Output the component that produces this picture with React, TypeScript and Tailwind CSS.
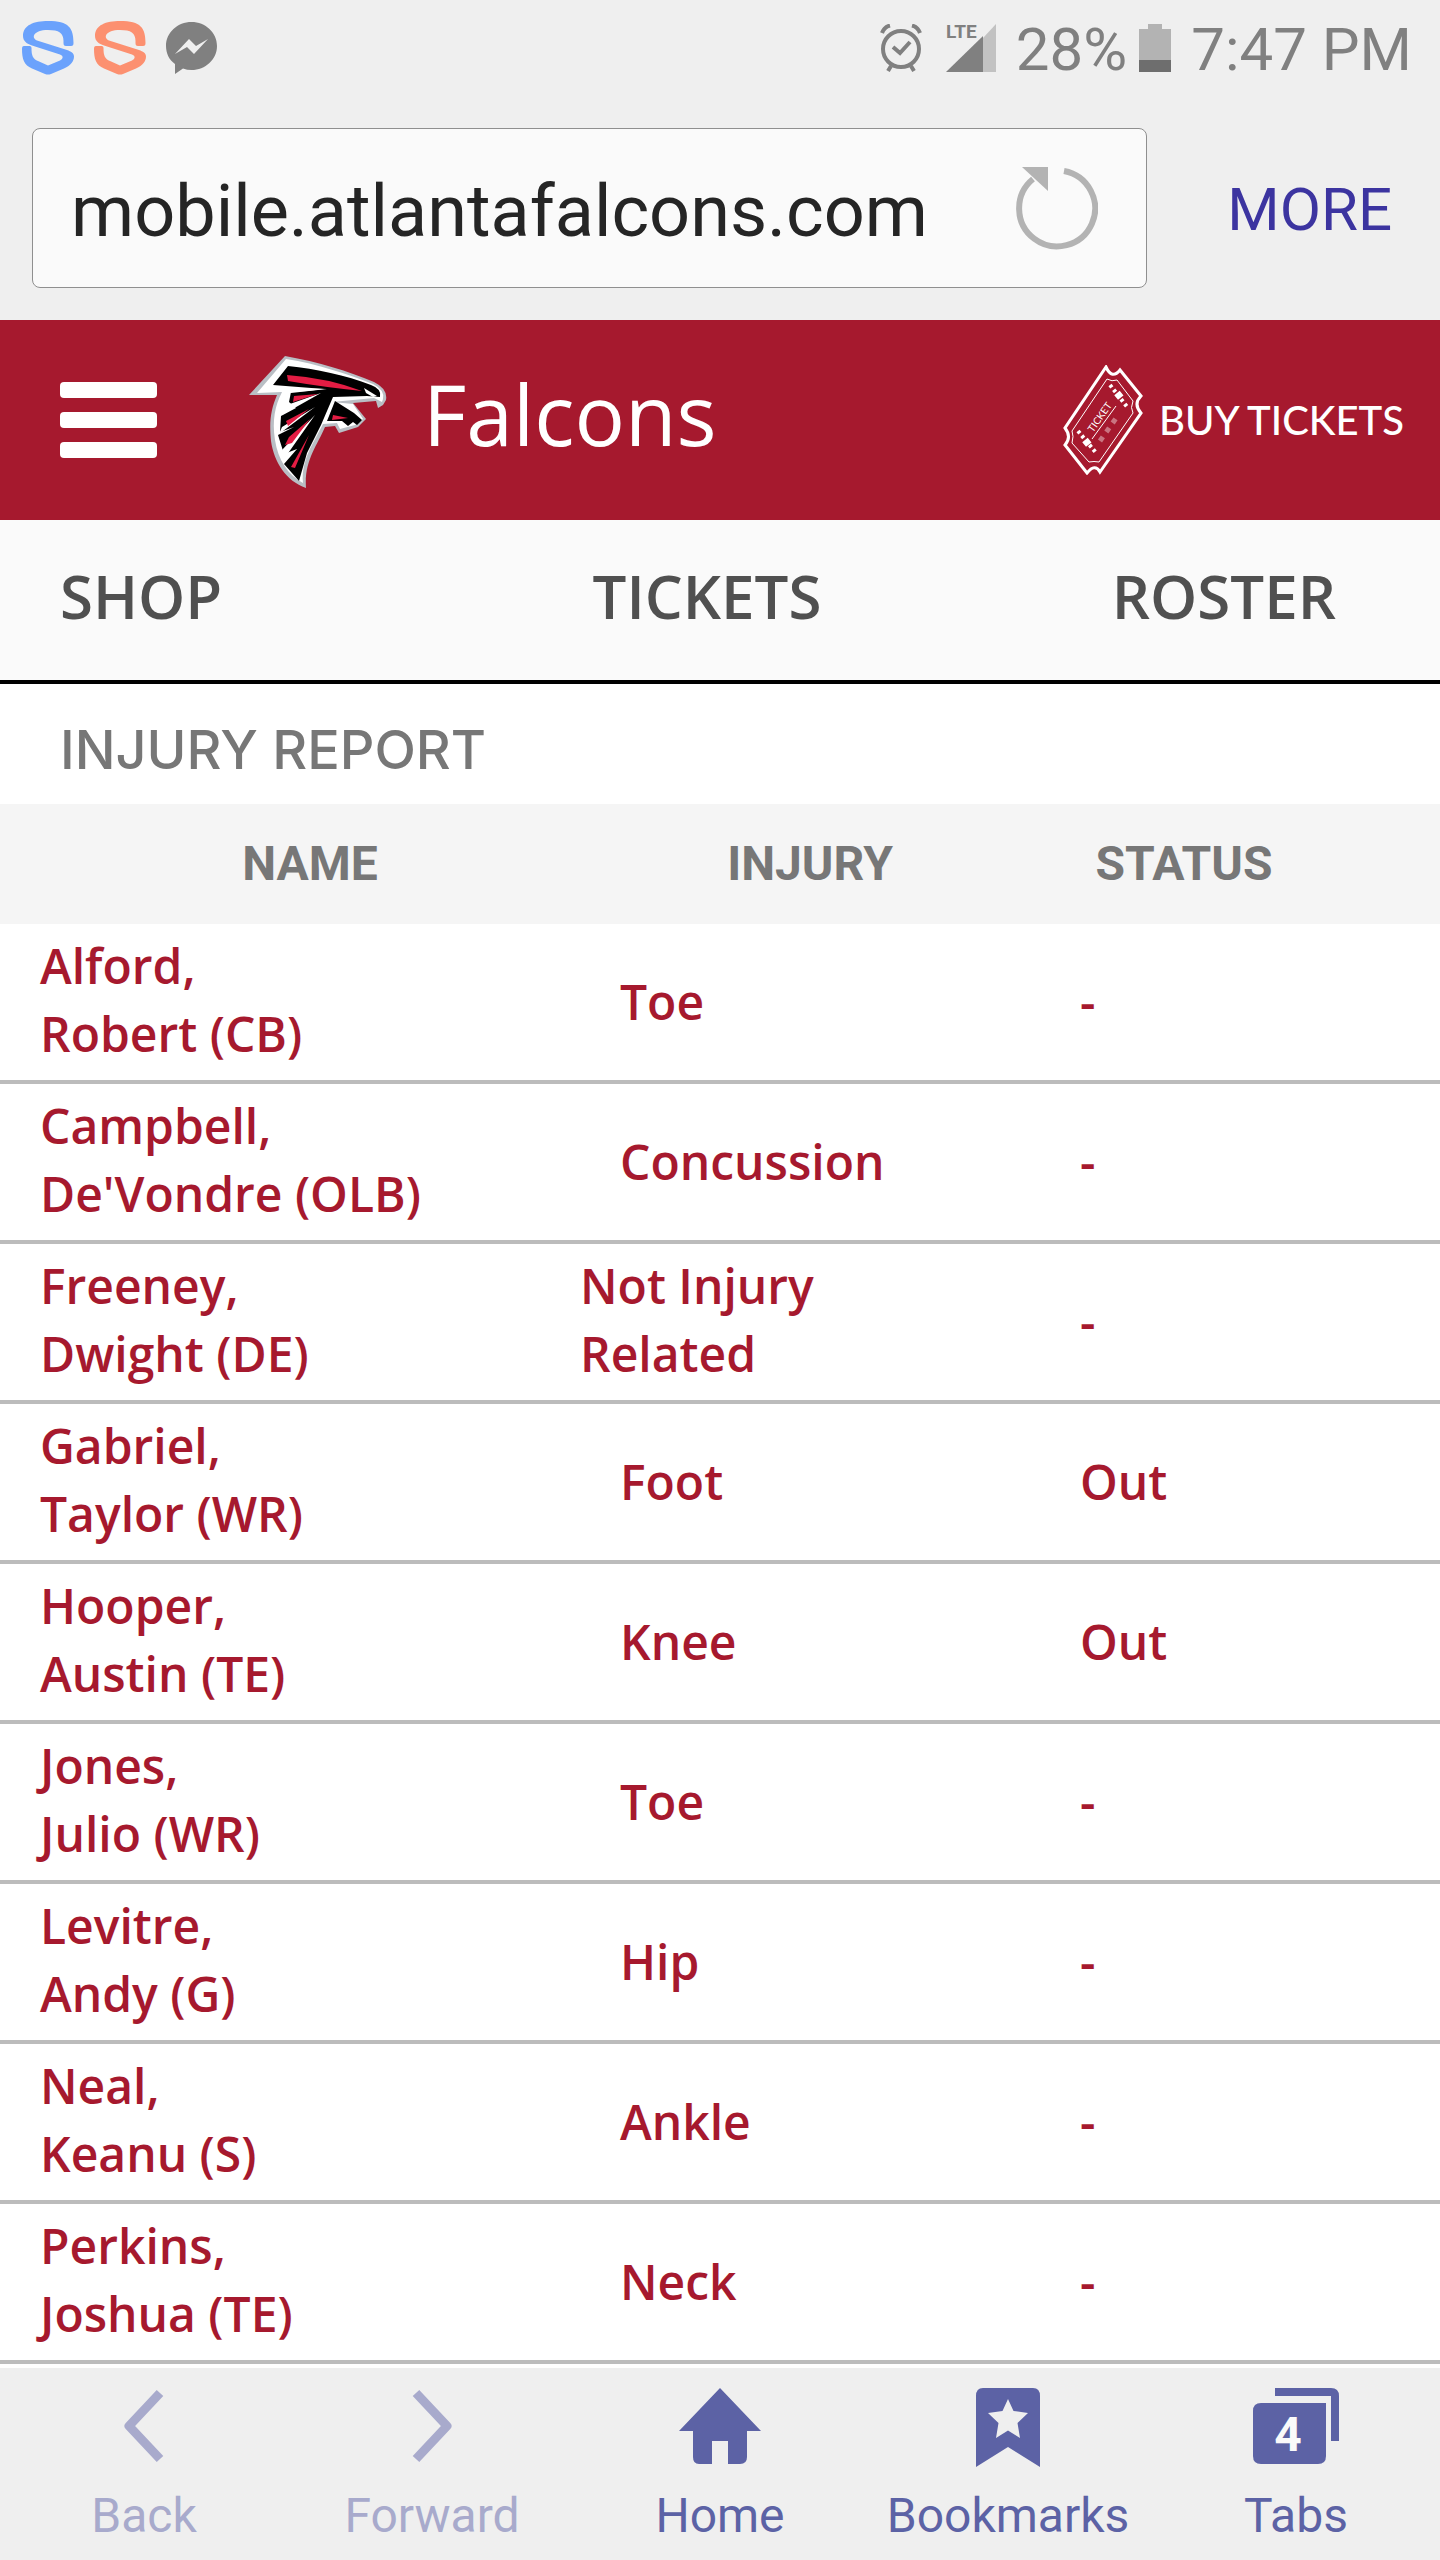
import React from 'react';

const menu = ['SHOP', 'TICKETS', 'ROSTER'];

const players = [
  { last: 'Alford', first: 'Robert (CB)', injury: 'Toe', status: '-' },
  { last: 'Campbell', first: "De'Vondre (OLB)", injury: 'Concussion', status: '-' },
  { last: 'Freeney', first: 'Dwight (DE)', injury: 'Not Injury Related', status: '-' },
  { last: 'Gabriel', first: 'Taylor (WR)', injury: 'Foot', status: 'Out' },
  { last: 'Hooper', first: 'Austin (TE)', injury: 'Knee', status: 'Out' },
  { last: 'Jones', first: 'Julio (WR)', injury: 'Toe', status: '-' },
  { last: 'Levitre', first: 'Andy (G)', injury: 'Hip', status: '-' },
  { last: 'Neal', first: 'Keanu (S)', injury: 'Ankle', status: '-' },
  { last: 'Perkins', first: 'Joshua (TE)', injury: 'Neck', status: '-' },
];

function ShieldIcon({ className }: { className: string }) {
  return (
    <svg viewBox="0 0 52 54" className={className} fill="currentColor" aria-hidden="true">
      <path d="M26 0C12 0 1 4 1 15C1 20 5 23 10 24.500L38 33.500C42 35 41 38 38 39.500L26 44.500L16 40C11 38 9.500 35 9.500 27C9.500 25.500 8.500 25 7 25H2C.5 25 0 26 0 28C0 38 2 44 10 47.500L23 53Q26 54 29 53L42 47.500C49 44.500 52 40 52 35.500C52 32 49 30.500 45 29L15 19.500C9 17 11 9 26 9C37 9 41.500 12 41.500 20V22C41.500 24 42 25 44 25H49C51 25 51.500 24 51.500 22C51.500 7 47 0 26 0Z" />
    </svg>
  );
}

function MessengerIcon() {
  return (
    <svg viewBox="0 0 51 52" className="h-13 w-[51px]" aria-hidden="true">
      <path fill="#808080" d="M25.500 0C39.500 0 51 10.500 51 24S39.500 48 25.500 48Q21 48 17 46.500L9 52V42C3 38 0 31 0 24C0 10.500 11.500 0 25.500 0Z" />
      <path fill="#efefef" d="M9 32L23 17L30 24L42 17L28 32L21 25Z" />
    </svg>
  );
}

function AlarmIcon() {
  return (
    <svg viewBox="0 0 42 48" className="h-12 w-[42px]" fill="none" stroke="#808080" aria-hidden="true">
      <circle cx="21" cy="25" r="18" strokeWidth="4" />
      <path strokeWidth="4" d="M13 23L20 29L30 18M2 9Q4 3 10 1.500M40 9Q38 3 32 1.500M11 42L8 47M31 42L34 47" />
    </svg>
  );
}

function ReloadIcon() {
  return (
    <svg viewBox="0 0 84 84" className="h-21 w-21" aria-hidden="true">
      <path fill="none" stroke="#b3b3b3" strokeWidth="6" d="M50 5A38 38 0 1 1 19 13" />
      <path fill="#b3b3b3" d="M8 1H34V25Z" />
    </svg>
  );
}

function FalconLogo() {
  return (
    <svg viewBox="0 0 138 134" className="mt-1 h-[134px] w-[138px]" aria-hidden="true">
      <path fill="#b9bec4" d="M0 40L36 1C70 7 99 16 125 27Q139 34 137 45L134 50L129 53L127 46L104 48L117 64L109 72L90 78L86 71L76 72C68 91 55 106 57 133C37 126 25 107 22 86C20 66 22 54 28 40Z" />
      <path fill="#fff" d="M8 38L37 4C69 9 98 19 124 29Q136 35 134 44L133 47L125 43L83 47L104 49L114 64L106 70L91 74L88 68L74 69C64 89 52 105 54 128C39 120 29 105 26 85C23 65 26 51 33 37Z" />
      <path fill="#000" d="M24 30L39 11C67 14 97 20 122 30Q133 34 131 42L118 41L84 42L72 70L58 98L50 126L35 109L48 94L35 99L29 80L45 72L31 77L32 61L47 53L40 47L42 37L58 36L75 34Z" />
      <path fill="#fff" d="M38 50L72 38L33 60ZM33 72L66 52L30 79ZM33 95L66 60L35 104ZM24 34L36 33L78 34L42 38Z" />
      <path fill="#e31c43" d="M38 20Q79 23 113 36Q74 32 39 26ZM45 41L69 39L44 47ZM37 66L60 54L39 71ZM36 90L40 82L61 64L43 88ZM42 112L60 80L46 113Z" />
      <path fill="#000" d="M86 46L105 58L113 65L108 70L104 67L99 71L93 66L78 66Z" />
      <path fill="#e31c43" d="M84 60L99 63L83 65Z" />
      <path fill="#fff" d="M115 33L128 41L124 42L117 38Z" />
    </svg>
  );
}

function TicketIcon() {
  return (
    <svg viewBox="0 0 80 110" className="h-[110px] w-20" fill="none" stroke="#fff" aria-hidden="true">
      <path strokeWidth="3" d="M43 2Q49 15 57 5L78 31Q70 39 78 48L37 107Q32 98 24 108L2 80Q9 72 2 63Z" />
      <path strokeWidth="1" d="M44 14Q49 17 54 15L70 36Q67 43 70 48L36 97Q31 96 26 97L9 78Q11 71 9 66Z" />
      <path strokeWidth="4" strokeDasharray="3 3" d="M47 20L65 43M15 66L34 89" />
      <path strokeWidth="7" strokeDasharray="6 40" d="M54 28L58 33M22 75L26 80" />
      <path strokeWidth="1" d="M29 74L53 41" />
      <path strokeWidth="5" strokeDasharray="5 6" d="M37 76L56 49" opacity=".4" />
      <text x="30" y="68" fill="#fff" stroke="none" fontSize="10" fontFamily="Lato, sans-serif" transform="rotate(-55 30 68)">TICKET</text>
    </svg>
  );
}

function ChevronIcon({ direction }: { direction: 'left' | 'right' }) {
  return (
    <svg viewBox="0 0 40 76" className="h-19 w-10" fill="none" stroke="currentColor" strokeWidth="9" strokeLinejoin="round" aria-hidden="true">
      <path d={direction === 'left' ? 'M36 5L5 38L36 71' : 'M4 5L35 38L4 71'} />
    </svg>
  );
}

function HomeIcon() {
  return (
    <svg viewBox="0 0 82 76" className="h-19 w-[82px]" fill="currentColor" aria-hidden="true">
      <path d="M41 0L82 43H68V69Q68 76 61 76H49V53H33V76H20Q14 76 14 69V43H0Z" />
    </svg>
  );
}

function BookmarkIcon() {
  return (
    <svg viewBox="0 0 64 79" className="h-[79px] w-16" aria-hidden="true">
      <path fill="currentColor" d="M7 0H57Q64 0 64 8V79L32 59L0 79V8Q0 0 7 0Z" />
      <path fill="#efefef" d="M32 11L37.500 23L52 25L41.500 35L44 50L32 42.500L20 50L22.500 35L12 25L26.500 23Z" />
    </svg>
  );
}

function TabsIcon() {
  return (
    <svg viewBox="0 0 86 76" className="h-19 w-[86px]" aria-hidden="true">
      <path fill="currentColor" d="M22 0H78Q86 0 86 8V53H78V8H22Z" />
      <path fill="currentColor" d="M8 15H73V68Q73 76 65 76H8Q0 76 0 68V23Q0 15 8 15Z" />
      <text x="35" y="63" textAnchor="middle" fill="#fafafa" fontSize="48" fontWeight="700" fontFamily="Roboto, sans-serif">4</text>
    </svg>
  );
}

const toolbar = [
  { label: 'Back', icon: <ChevronIcon direction="left" />, disabled: true },
  { label: 'Forward', icon: <ChevronIcon direction="right" />, disabled: true },
  { label: 'Home', icon: <HomeIcon /> },
  { label: 'Bookmarks', icon: <BookmarkIcon /> },
  { label: 'Tabs', icon: <TabsIcon /> },
];

function StatusBar() {
  return (
    <div className="flex h-24 items-center justify-between pl-[22px] pr-7 text-[60px] leading-none text-[#808080]">
      <div className="flex items-center gap-5">
        <ShieldIcon className="h-[54px] w-[52px] text-[#6ba2fc]" />
        <ShieldIcon className="h-[54px] w-[52px] text-[#fc9070]" />
        <MessengerIcon />
      </div>
      <div className="flex items-center">
        <AlarmIcon />
        <svg viewBox="0 0 50 48" className="ml-6 h-12 w-[50px] overflow-visible" aria-hidden="true">
          <path fill="#c2c2c2" d="M50 0V48H37V14Z" />
          <path fill="#808080" d="M0 48L37 12V48Z" />
          <text x="0" y="14" fill="#808080" fontSize="19" fontWeight="700" fontFamily="Roboto, sans-serif">LTE</text>
        </svg>
        <span className="ml-5 mt-1">28%</span>
        <svg viewBox="0 0 32 48" className="ml-3 h-12 w-8" aria-hidden="true">
          <path fill="#b3b3b3" d="M9 0H23V5H32V36H0V5H9Z" />
          <path fill="#6e6e6e" d="M0 36H32V48H0Z" />
        </svg>
        <span className="ml-5 mt-1">7:47 PM</span>
      </div>
    </div>
  );
}

function AddressBar() {
  return (
    <div className="flex items-center p-8">
      <div className="flex h-40 min-w-0 flex-1 items-center rounded-lg border border-[#8f8f8f] bg-[#fafafa] pl-[38px] pr-12">
        <input
          type="text"
          aria-label="Address"
          defaultValue="mobile.atlantafalcons.com"
          className="min-w-0 flex-1 bg-transparent pt-2 text-[72px] text-[#252525] outline-none"
        />
        <button type="button" aria-label="Reload" className="ml-20">
          <ReloadIcon />
        </button>
      </div>
      <button type="button" className="ml-20 mr-4 pt-1 text-[60px] leading-none text-[#3c34a0]">
        MORE
      </button>
    </div>
  );
}

function SiteHeader() {
  return (
    <header className="flex h-50 items-center bg-[#a6192e] pl-15 pr-9 text-white">
      <button type="button" aria-label="Menu" className="flex w-[97px] flex-col gap-[14px]">
        <span className="h-4 rounded-sm bg-white" />
        <span className="h-4 rounded-sm bg-white" />
        <span className="h-4 rounded-sm bg-white" />
      </button>
      <a href="#" className="ml-[92px] flex items-center gap-9">
        <FalconLogo />
        <span className="pb-3 font-['Open_Sans'] text-[84px] leading-none">Falcons</span>
      </a>
      <a href="#" className="ml-auto flex items-center gap-4">
        <TicketIcon />
        <span className="font-[Lato] text-[40px] font-medium leading-none">BUY TICKETS</span>
      </a>
    </header>
  );
}

export default function App() {
  return (
    <div className="flex min-h-screen flex-col bg-white font-[Roboto,sans-serif]">
      <div className="bg-[#efefef]">
        <StatusBar />
        <AddressBar />
      </div>
      <SiteHeader />
      <nav className="grid h-41 grid-cols-[1fr_auto_1fr] items-center border-b-4 border-black bg-[#fafafa] pb-2 pl-15 pr-[86px] font-['Open_Sans'] text-[60px] font-semibold text-[#505050]">
        {menu.map((item) => (
          <a key={item} href="#" className="last:pr-[18px] last:text-right">{item}</a>
        ))}
      </nav>
      <main className="flex-1">
        <h1 className="flex h-30 items-center px-15 pt-3 font-[Inter] text-[54px] font-medium leading-none text-[#777]">
          INJURY REPORT
        </h1>
        <table className="w-full table-fixed border-separate border-spacing-0 text-left text-[48px] leading-[68px]">
          <thead>
            <tr className="h-30 bg-[#f5f5f5] text-center text-[#777]">
              <th className="w-29/72 pl-10 font-bold">NAME</th>
              <th className="w-23/72 font-bold">INJURY</th>
              <th className="pr-28 font-bold">STATUS</th>
            </tr>
          </thead>
          <tbody className="font-['Open_Sans'] font-semibold text-[#a6192e]">
            {players.map((p) => (
              <tr key={p.last} className="h-40 *:border-b-4 *:border-[#bcbcbc]">
                <td className="pb-1 pl-10">
                  <a href="#">
                    {p.last},<br />
                    {p.first}
                  </a>
                </td>
                <td className={p.injury.includes(' ') ? 'pb-1 pr-40' : 'pl-10'}>{p.injury}</td>
                <td className="pl-10">{p.status}</td>
              </tr>
            ))}
          </tbody>
        </table>
      </main>
      <footer className="grid h-48 grid-cols-5 bg-[#efefef] text-[#5c62a5]">
        {toolbar.map((t) => (
          <button
            key={t.label}
            type="button"
            disabled={t.disabled}
            className="flex flex-col items-center pt-5 text-[48px] leading-none disabled:text-[#a8aacc]"
          >
            <span className="flex h-20 items-start">{t.icon}</span>
            <span className="mt-6">{t.label}</span>
          </button>
        ))}
      </footer>
    </div>
  );
}
